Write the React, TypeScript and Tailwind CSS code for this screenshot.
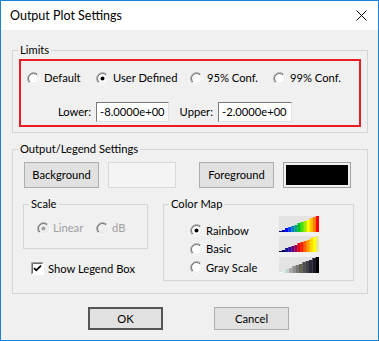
import React from "react";

const rainbow = ["#000080", "#0000b0", "#0000f0", "#0040ff", "#0080c0", "#00a080", "#00c020", "#40e000", "#a0e800", "#ffff00", "#ffc000", "#ff8000", "#ff0000"];
const basic = ["#000030", "#000060", "#101090", "#3010a0", "#600080", "#a00050", "#e00010", "#ff2000", "#ff6000", "#ffa000", "#ffd800", "#ffff00", "#e8e890"];
const grays = ["#ffffff", "#d8ece8", "#c0d4d0", "#a8a8a8", "#909090", "#787878", "#686850", "#505050", "#404048", "#282838", "#181828", "#000000"];

function Radio({ checked = false, disabled = false }: { checked?: boolean; disabled?: boolean }) {
  return (
    <svg width="13" height="13" viewBox="0 0 13 13" className="shrink-0">
      <circle cx="6.5" cy="6.5" r="5.5" fill={disabled ? "#f0f0f0" : "#ffffff"} />
      <path d="M2.26 10.74 A6 6 0 0 1 10.74 2.26" fill="none" stroke="#a0a0a0" />
      <path d="M10.74 2.26 A6 6 0 0 1 2.26 10.74" fill="none" stroke="#ffffff" />
      <path d="M2.96 10.04 A5 5 0 0 1 10.04 2.96" fill="none" stroke="#696969" />
      <path d="M10.04 2.96 A5 5 0 0 1 2.96 10.04" fill="none" stroke="#e3e3e3" />
      {checked && <circle cx="6.5" cy="6.5" r="2" fill={disabled ? "#a0a0a0" : "#000000"} />}
    </svg>
  );
}

function Checkbox() {
  return (
    <svg width="13" height="13" viewBox="0 0 13 13" className="shrink-0">
      <rect x="0" y="0" width="13" height="13" fill="#ffffff" />
      <path d="M0.5 12.5 V0.5 H12.5" fill="none" stroke="#a0a0a0" />
      <path d="M1.5 11.5 V1.5 H11.5" fill="none" stroke="#696969" />
      <path d="M0.5 12.5 H12.5 V0.5" fill="none" stroke="#ffffff" />
      <path d="M3 6.2 L5.2 8.4 L10 3.6" fill="none" stroke="#000000" strokeWidth="1.7" />
    </svg>
  );
}

function ColorRamp({ colors }: { colors: string[] }) {
  const w = 40 / colors.length;
  return (
    <svg width="40" height="16" viewBox="0 0 40 16" className="block">
      <rect x="0" y="0" width="40" height="16" fill="#e3e3e3" />
      {colors.map((c, i) => {
        const h = Math.max(1, Math.round((16 * (i + 1)) / colors.length));
        return <rect key={i} x={i * w} y={16 - h} width={w + 0.2} height={h} fill={c} />;
      })}
    </svg>
  );
}

function Legend({ children }: { children: React.ReactNode }) {
  return <legend className="ml-[5px] px-[2px] leading-[14px]">{children}</legend>;
}

export default function App() {
  return (
    <div
      className="w-[379px] h-[341px] border border-[#1883d7] bg-[#f0f0f0] flex flex-col text-[11.2px] leading-[14px] text-black"
      style={{ fontFamily: "Lato, 'Liberation Sans', sans-serif" }}
    >
      {/* title bar */}
      <div className="h-[29px] bg-white flex items-center justify-between pl-[9px] pr-[11px]">
        <span className="text-[12.5px]">Output Plot Settings</span>
        <svg width="11" height="11" viewBox="0 0 11 11">
          <path d="M0.5 0.5 L10.5 10.5 M10.5 0.5 L0.5 10.5" stroke="#000" strokeWidth="1" />
        </svg>
      </div>

      <div className="flex flex-col pl-[11px] pr-[10px] pt-[13px]">
        {/* Limits */}
        <fieldset className="border border-[#d5d5d5]">
          <Legend>Limits</Legend>
          <div className="pt-[2px] pb-[5px]">
            <div className="mx-[6px] border-2 border-[#ea1c24] pt-[10px] pb-[3px]">
              <div className="flex h-[14px] items-center pl-[6px]">
                <div className="flex items-center gap-[4px] w-[69px]">
                  <Radio />
                  <span>Default</span>
                </div>
                <div className="flex items-center gap-[4px] w-[94px]">
                  <Radio checked />
                  <span>User Defined</span>
                </div>
                <div className="flex items-center gap-[4px] w-[83px]">
                  <Radio />
                  <span>95% Conf.</span>
                </div>
                <div className="flex items-center gap-[4px]">
                  <Radio />
                  <span>99% Conf.</span>
                </div>
              </div>
              <div className="flex items-center mt-[17px] pl-[32px]">
                <span className="w-[38px] text-right">Lower:</span>
                <div className="ml-[5px] w-[73px] h-[20px] bg-white border border-t-[#7a7a7a] border-l-[#7a7a7a] border-r-[#e3e3e3] border-b-[#e3e3e3] flex items-center pl-[3px] overflow-hidden whitespace-nowrap">
                  -8.0000e+00
                </div>
                <span className="w-[44px] text-right">Upper:</span>
                <div className="ml-[5px] w-[74px] h-[20px] bg-white border border-t-[#7a7a7a] border-l-[#7a7a7a] border-r-[#e3e3e3] border-b-[#e3e3e3] flex items-center pl-[3px] overflow-hidden whitespace-nowrap">
                  -2.0000e+00
                </div>
              </div>
            </div>
          </div>
        </fieldset>

        {/* Output/Legend Settings */}
        <fieldset className="mt-[9px] border border-[#d5d5d5]">
          <Legend>Output/Legend Settings</Legend>
          <div className="pl-[10px] pt-[6px] pb-[12px]">
            <div className="flex items-stretch pl-[1px] h-[26px]">
              <div className="w-[75px] flex items-center justify-center bg-[#e1e1e1] border border-[#adadad]">
                Background
              </div>
              <div className="ml-[9px] w-[68px] bg-[#f4f4f4] border border-[#d9d9d9]" />
              <div className="ml-[23px] w-[75px] flex items-center justify-center bg-[#e1e1e1] border border-[#adadad]">
                Foreground
              </div>
              <div className="ml-[9px] w-[68px] border border-[#a0a0a0] p-[2px] bg-[#f0f0f0]">
                <div className="w-full h-full bg-black" />
              </div>
            </div>

            <div className="flex items-start mt-[9px]">
              <div className="flex flex-col">
                <fieldset className="w-[125px] border border-[#d5d5d5]">
                  <Legend>Scale</Legend>
                  <div className="flex h-[14px] items-center text-[#a0a0a0] mt-[10px] mb-[13px] pl-[13px]">
                    <div className="flex items-center gap-[3px] w-[59px]">
                      <Radio checked disabled />
                      <span>Linear</span>
                    </div>
                    <div className="flex items-center gap-[3px]">
                      <Radio disabled />
                      <span>dB</span>
                    </div>
                  </div>
                </fieldset>
                <div className="flex items-center gap-[4px] mt-[13px] pl-[8px] h-[13px]">
                  <Checkbox />
                  <span>Show Legend Box</span>
                </div>
              </div>

              <fieldset className="ml-[15px] w-[191px] h-[84px] border border-[#d5d5d5]">
                <Legend>Color Map</Legend>
                <div className="flex pl-[26px]">
                  <div className="w-[89px] flex flex-col pt-[10px]">
                    <div className="flex items-center gap-[3px] h-[19px]">
                      <Radio checked />
                      <span>Rainbow</span>
                    </div>
                    <div className="flex items-center gap-[3px] h-[18px]">
                      <Radio />
                      <span>Basic</span>
                    </div>
                    <div className="flex items-center gap-[3px] h-[19px]">
                      <Radio />
                      <span>Gray Scale</span>
                    </div>
                  </div>
                  <div className="flex flex-col pt-[5px]">
                    <ColorRamp colors={rainbow} />
                    <div className="mt-[4px]">
                      <ColorRamp colors={basic} />
                    </div>
                    <div className="mt-[5px]">
                      <ColorRamp colors={grays} />
                    </div>
                  </div>
                </div>
              </fieldset>
            </div>
          </div>
        </fieldset>

        <div className="flex mt-[13px] pl-[76px] h-[23px]">
          <div className="w-[75px] flex items-center justify-center bg-[#e1e1e1] border-2 border-[#555555]">OK</div>
          <div className="ml-[51px] w-[75px] flex items-center justify-center bg-[#e1e1e1] border border-[#adadad]">
            Cancel
          </div>
        </div>
      </div>
    </div>
  );
}
